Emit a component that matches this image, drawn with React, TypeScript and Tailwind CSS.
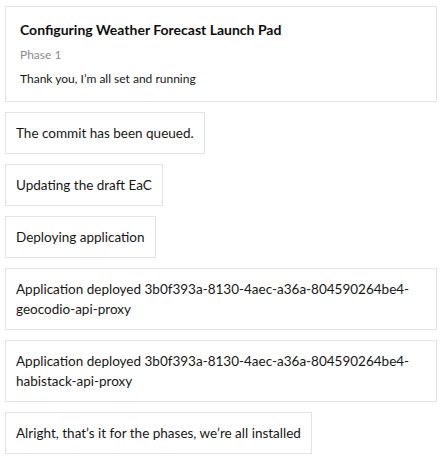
import React from "react";

const font = { fontFamily: "Lato, 'Open Sans', sans-serif" };

function Card({ children, full }: { children: React.ReactNode; full?: boolean }) {
  return (
    <div
      className={`${full ? "w-full" : "w-fit"} border border-[#e3e3e3] bg-white px-[10px] py-[10px] text-[13.5px] leading-[20px] text-[#161616]`}
    >
      {children}
    </div>
  );
}

export default function App() {
  return (
    <div className="min-h-[461px] bg-white pl-[5px] pr-[10px] pt-[6px]" style={font}>
      <div className="flex w-[432px] flex-col gap-[10px]">
        <div className="w-full border border-[#e3e3e3] bg-white px-[14px] pb-[10px] pt-[11px]">
          <div className="mb-[1px] text-[14px] font-bold leading-[24px] text-[#0d0d0d]">
            Configuring Weather Forecast Launch Pad
          </div>
          <div className="text-[12px] leading-[24px] text-[#8a8a8a]">Phase 1</div>
          <div className="text-[12px] leading-[24px] text-[#161616]">Thank you, I’m all set and running</div>
        </div>
        <Card>The commit has been queued.</Card>
        <Card>Updating the draft EaC</Card>
        <Card>Deploying application</Card>
        <Card full>
          Application deployed 3b0f393a-8130-4aec-a36a-804590264be4-
          <br />
          geocodio-api-proxy
        </Card>
        <Card full>
          Application deployed 3b0f393a-8130-4aec-a36a-804590264be4-
          <br />
          habistack-api-proxy
        </Card>
        <Card>Alright, that’s it for the phases, we’re all installed</Card>
        <div className="pl-[1px] text-[13.5px] leading-[20px] text-[#161616]">Let</div>
      </div>
    </div>
  );
}
